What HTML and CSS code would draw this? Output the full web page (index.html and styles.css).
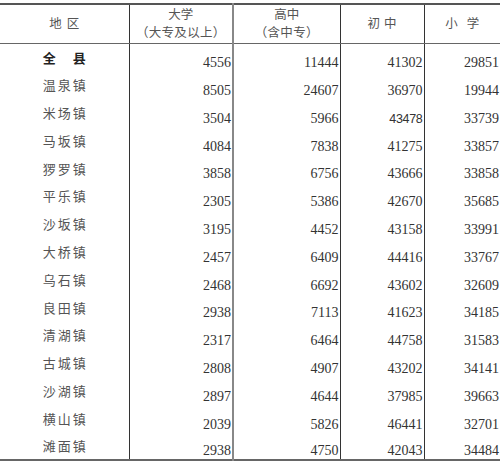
FILE: index.html
```
<!DOCTYPE html>
<html lang="zh">
<head>
<meta charset="utf-8">
<link rel="stylesheet" href="styles.css">
</head>
<body>
<table class="edu">
<colgroup>
<col class="c-name"><col class="c-univ"><col class="c-high"><col class="c-mid"><col class="c-pri">
</colgroup>
<thead>
<tr class="head">
<th class="h-area">地区</th>
<th class="h-univ"><span class="l1">大学</span><span class="l2">（大专及以上）</span></th>
<th class="h-high"><span class="l1">高中</span><span class="l2">（含中专）</span></th>
<th class="h-mid">初中</th>
<th class="h-pri">小学</th>
</tr>
</thead>
<tbody>
<tr><td class="name total">全　县</td><td class="num">4556</td><td class="num">11444</td><td class="num">41302</td><td class="num">29851</td></tr>
<tr><td class="name">温泉镇</td><td class="num">8505</td><td class="num">24607</td><td class="num">36970</td><td class="num">19944</td></tr>
<tr><td class="name">米场镇</td><td class="num">3504</td><td class="num">5966</td><td class="num small">43478</td><td class="num">33739</td></tr>
<tr><td class="name">马坂镇</td><td class="num">4084</td><td class="num">7838</td><td class="num">41275</td><td class="num">33857</td></tr>
<tr><td class="name">猡罗镇</td><td class="num">3858</td><td class="num">6756</td><td class="num">43666</td><td class="num">33858</td></tr>
<tr><td class="name">平乐镇</td><td class="num">2305</td><td class="num">5386</td><td class="num">42670</td><td class="num">35685</td></tr>
<tr><td class="name">沙坂镇</td><td class="num">3195</td><td class="num">4452</td><td class="num">43158</td><td class="num">33991</td></tr>
<tr><td class="name">大桥镇</td><td class="num">2457</td><td class="num">6409</td><td class="num">44416</td><td class="num">33767</td></tr>
<tr><td class="name">乌石镇</td><td class="num">2468</td><td class="num">6692</td><td class="num">43602</td><td class="num">32609</td></tr>
<tr><td class="name">良田镇</td><td class="num">2938</td><td class="num">7113</td><td class="num">41623</td><td class="num">34185</td></tr>
<tr><td class="name">清湖镇</td><td class="num">2317</td><td class="num">6464</td><td class="num">44758</td><td class="num">31583</td></tr>
<tr><td class="name">古城镇</td><td class="num">2808</td><td class="num">4907</td><td class="num">43202</td><td class="num">34141</td></tr>
<tr><td class="name">沙湖镇</td><td class="num">2897</td><td class="num">4644</td><td class="num">37985</td><td class="num">39663</td></tr>
<tr><td class="name">横山镇</td><td class="num">2039</td><td class="num">5826</td><td class="num">46441</td><td class="num">32701</td></tr>
<tr><td class="name">滩面镇</td><td class="num">2938</td><td class="num">4750</td><td class="num">42043</td><td class="num">34484</td></tr>
</tbody>
</table>
</body>
</html>
```
FILE: styles.css
```
html, body {
  margin: 0;
  padding: 0;
  background: #fff;
}
body {
  padding-top: 3px;
  color: #333;
  font-family: "Noto Sans CJK SC", "Noto Sans", sans-serif;
}
.edu {
  width: 500px;
  border-collapse: collapse;
  table-layout: fixed;
  border-top: 2px solid #555;
  border-bottom: 2px solid #666;
}
.c-name { width: 129px; }
.c-univ { width: 104px; }
.c-high { width: 107px; }
.c-mid { width: 84px; }
.c-pri { width: 76px; }

.edu th, .edu td {
  padding: 0;
  border-left: 1px solid #333;
}
.edu th:first-child, .edu td:first-child {
  border-left: none;
}
.edu th:nth-child(3), .edu td:nth-child(3) {
  border-left: 2px solid #888;
}
.head {
  height: 38px;
}
.head th {
  font-weight: normal;
  font-size: 12.5px;
  line-height: 18px;
  color: #555;
  vertical-align: middle;
  padding-bottom: 2px;
  border-bottom: 1px solid #666;
}
.head .l1, .head .l2 {
  display: block;
}
.head .l2 {
  letter-spacing: 0.3px;
}
.h-area { letter-spacing: 5px; text-indent: 5px; }
.h-mid { letter-spacing: 4px; text-indent: 4px; }
.h-pri { letter-spacing: 9px; text-indent: 9px; }

.edu tbody tr {
  height: 27.8px;
}
.name {
  text-align: center;
  font-size: 13px;
  line-height: 14px;
  letter-spacing: 2px;
  text-indent: 2px;
  color: #555;
  vertical-align: middle;
  padding-bottom: 1px;
}
.name.total {
  font-weight: bold;
  color: #222;
}
.num {
  text-align: right;
  font-family: "Liberation Serif", "DejaVu Serif", serif;
  font-size: 14px;
  line-height: 14px;
  vertical-align: bottom;
  padding-bottom: 1px !important;
  padding-right: 1px !important;
  color: #333;
}
.num.small {
  font-family: "Liberation Sans", "DejaVu Sans", sans-serif;
  font-size: 12.5px;
  letter-spacing: -0.3px;
}
```
